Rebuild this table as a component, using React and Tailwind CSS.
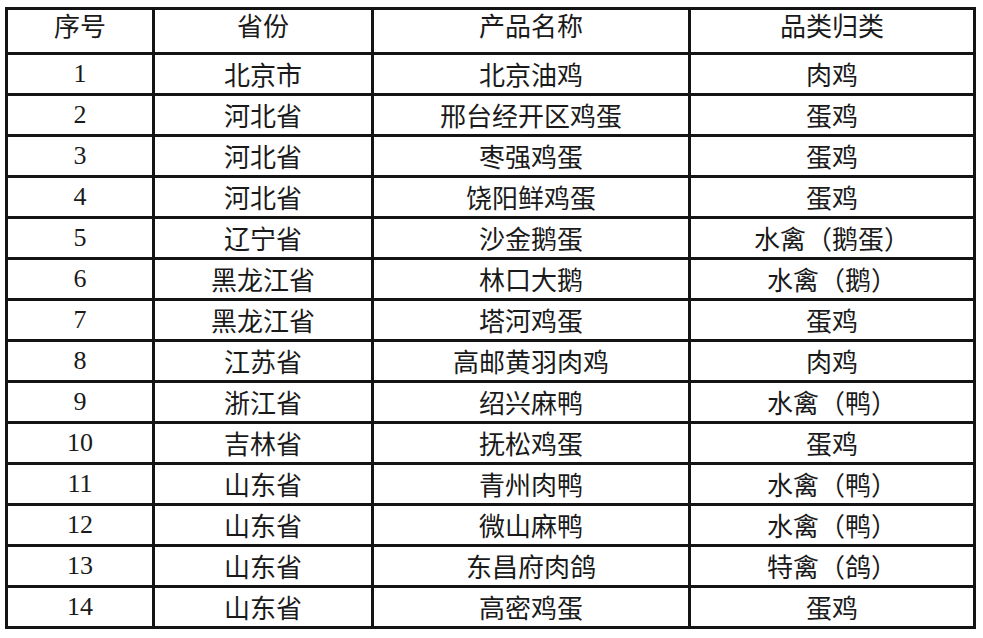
const rows = [
  ["1", "北京市", "北京油鸡", "肉鸡"],
  ["2", "河北省", "邢台经开区鸡蛋", "蛋鸡"],
  ["3", "河北省", "枣强鸡蛋", "蛋鸡"],
  ["4", "河北省", "饶阳鲜鸡蛋", "蛋鸡"],
  ["5", "辽宁省", "沙金鹅蛋", "水禽（鹅蛋）"],
  ["6", "黑龙江省", "林口大鹅", "水禽（鹅）"],
  ["7", "黑龙江省", "塔河鸡蛋", "蛋鸡"],
  ["8", "江苏省", "高邮黄羽肉鸡", "肉鸡"],
  ["9", "浙江省", "绍兴麻鸭", "水禽（鸭）"],
  ["10", "吉林省", "抚松鸡蛋", "蛋鸡"],
  ["11", "山东省", "青州肉鸭", "水禽（鸭）"],
  ["12", "山东省", "微山麻鸭", "水禽（鸭）"],
  ["13", "山东省", "东昌府肉鸽", "特禽（鸽）"],
  ["14", "山东省", "高密鸡蛋", "蛋鸡"],
];

const cjk = "font-['Noto_Sans_CJK_SC',sans-serif]";
const cell = "border-[3px] border-[#141414] p-0 text-center align-middle";

export default function App() {
  return (
    <div className="min-h-[638px] w-[983px] bg-white pl-[5px] pt-[7px] text-[26px] leading-none text-[#1a1a1a]">
      <table className="w-[968px] table-fixed border-collapse border-[3px] border-[#141414]">
        <colgroup>
          <col className="w-[147px]" />
          <col className="w-[219px]" />
          <col className="w-[317px]" />
          <col className="w-[285px]" />
        </colgroup>
        <thead>
          <tr className={`h-[45px] ${cjk}`}>
            {["序号", "省份", "产品名称", "品类归类"].map((h) => (
              <th key={h} className={`${cell} pb-[12px] font-normal`}>
                {h}
              </th>
            ))}
          </tr>
        </thead>
        <tbody>
          {rows.map((r) => (
            <tr key={r[0]} className="h-[41px]">
              <td className={`${cell} font-['Liberation_Serif',serif]`}>{r[0]}</td>
              <td className={`${cell} ${cjk}`}>{r[1]}</td>
              <td className={`${cell} ${cjk}`}>{r[2]}</td>
              <td className={`${cell} ${cjk}`}>{r[3]}</td>
            </tr>
          ))}
        </tbody>
      </table>
    </div>
  );
}
